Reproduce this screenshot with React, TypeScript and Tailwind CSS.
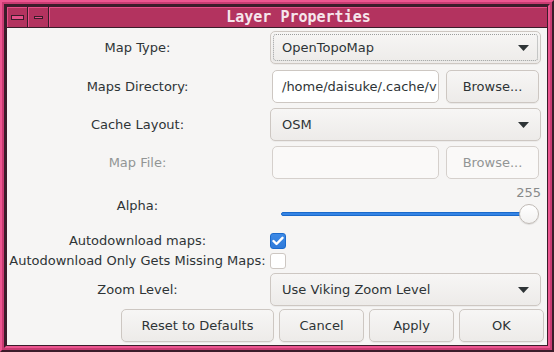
import React from 'react';

const font = "font-['DejaVu_Sans',sans-serif]";

function Label({ children, disabled }: { children: React.ReactNode; disabled?: boolean }) {
  return (
    <div
      className={`w-[261px] shrink-0 flex items-center justify-center text-[13px] whitespace-nowrap ${
        disabled ? 'text-[#929595]' : 'text-[#2e3436]'
      }`}
    >
      {children}
    </div>
  );
}

function Arrow() {
  return (
    <svg width="11" height="6" viewBox="0 0 11 6" className="shrink-0">
      <path d="M0 0 L11 0 L5.5 6 Z" fill="#2e3436" />
    </svg>
  );
}

function Combo({ value, focused }: { value: string; focused?: boolean }) {
  return (
    <div className="relative w-[271px] h-[33px] flex items-center justify-between pl-[11px] pr-[11px] rounded-[5px] border border-[#cdc7c2] bg-gradient-to-b from-[#f7f6f5] to-[#edebe9] shadow-[0_1px_0_rgba(0,0,0,0.04)] text-[13px] text-[#2e3436]">
      <span>{value}</span>
      <Arrow />
      {focused && (
        <div className="absolute inset-[2px] rounded-[3px] border border-dotted border-[#9a9d9e]" />
      )}
    </div>
  );
}

function Button({ children, width, disabled }: { children: React.ReactNode; width: string; disabled?: boolean }) {
  return (
    <div
      className={`${width} h-[33px] shrink-0 flex items-center justify-center rounded-[5px] border text-[13px] ${
        disabled
          ? 'border-[#d5d0cc] bg-[#faf9f8] text-[#929595]'
          : 'border-[#cdc7c2] bg-gradient-to-b from-[#f7f6f5] to-[#edebe9] text-[#2e3436] shadow-[0_1px_0_rgba(0,0,0,0.05)]'
      }`}
    >
      {children}
    </div>
  );
}

function Entry({ value, disabled }: { value?: string; disabled?: boolean }) {
  return (
    <div
      className={`w-[167px] h-[33px] shrink-0 flex items-center overflow-hidden pl-[9px] rounded-[5px] border text-[13px] text-[#2e3436] whitespace-nowrap ${
        disabled ? 'border-[#d5d0cc] bg-[#faf9f8]' : 'border-[#cdc7c2] bg-white'
      }`}
    >
      {value}
    </div>
  );
}

function Check({ checked }: { checked?: boolean }) {
  if (checked) {
    return (
      <div className="w-[16px] h-[16px] rounded-[3px] border border-[#1b6acb] bg-gradient-to-b from-[#3d8ae6] to-[#2f7ada] flex items-center justify-center">
        <svg width="12" height="10" viewBox="0 0 12 10">
          <path d="M1.5 5 L4.5 8 L10.5 1.8" stroke="white" strokeWidth="2.4" fill="none" strokeLinecap="round" strokeLinejoin="round" />
        </svg>
      </div>
    );
  }
  return <div className="w-[16px] h-[16px] rounded-[3px] border border-[#cdc7c2] bg-white" />;
}

export default function App() {
  return (
    <div className={`w-[554px] h-[352px] flex flex-col bg-[#c93b72] border-2 border-t-[#ec5690] border-l-[#ec5690] border-r-[#3b1c2a] border-b-[#3b1c2a] p-[2px] ${font}`}>
      <div className="flex-1 flex flex-col bg-[#3b1c2a] border-2 border-t-[#3b1c2a] border-l-[#3b1c2a] border-r-[#ec5690] border-b-[#ec5690] p-[1px] gap-[1px]">
        {/* title bar */}
        <div className="h-[20px] flex gap-[1px]">
          <div className="w-[20px] flex items-center justify-center bg-[#b3335f] border-t border-l border-[#e55089]">
            <div className="w-[13px] h-[5px] border border-[#3b1c2a] bg-[#e55089]" />
          </div>
          <div className="w-[20px] flex items-center justify-center bg-[#b3335f] border-t border-l border-[#e55089]">
            <div className="w-[9px] h-[3px] border border-[#3b1c2a] bg-[#e55089]" />
          </div>
          <div className="flex-1 flex items-center justify-center bg-[#b3335f] border-t border-l border-[#e55089] font-['DejaVu_Sans_Mono',monospace] font-bold text-[15px] text-[#f6e6ec]">
            Layer Properties
          </div>
        </div>

        {/* content */}
        <div className="flex-1 flex flex-col bg-[#f6f5f4] pr-[6px]">
          <div className="flex gap-[2px] mt-[3px] h-[33px]">
            <Label>Map Type:</Label>
            <Combo value="OpenTopoMap" focused />
          </div>

          <div className="flex gap-[2px] mt-[6px] h-[33px]">
            <Label>Maps Directory:</Label>
            <div className="flex gap-[7px] px-[2px]">
              <Entry value="/home/daisuke/.cache/v" />
              <Button width="w-[93px]">Browse...</Button>
            </div>
          </div>

          <div className="flex gap-[2px] mt-[5px] h-[33px]">
            <Label>Cache Layout:</Label>
            <Combo value="OSM" />
          </div>

          <div className="flex gap-[2px] mt-[5px] h-[33px]">
            <Label disabled>Map File:</Label>
            <div className="flex gap-[7px] px-[2px]">
              <Entry disabled />
              <Button width="w-[93px]" disabled>Browse...</Button>
            </div>
          </div>

          <div className="flex gap-[2px] mt-[4px] h-[46px]">
            <Label>Alpha:</Label>
            <div className="w-[271px] flex flex-col">
              <div className="mt-[2px] h-[15px] leading-[15px] text-right text-[13px] text-[#888a8a]">255</div>
              <div className="mt-[4px] h-[20px] flex items-center pl-[11px] pr-[2px]">
                <div className="flex-1 h-[4px] -mr-[10px] rounded-full bg-[#3584e4] border border-[#1b6acb]" />
                <div className="relative w-[20px] h-[20px] rounded-full border border-[#c0bab5] bg-gradient-to-b from-white to-[#f3f2f1] shadow-[0_1px_1px_rgba(0,0,0,0.1)]" />
              </div>
            </div>
          </div>

          <div className="flex gap-[2px] mt-[4px] h-[16px]">
            <Label>Autodownload maps:</Label>
            <Check checked />
          </div>

          <div className="flex gap-[2px] mt-[4px] h-[16px]">
            <Label>Autodownload Only Gets Missing Maps:</Label>
            <Check />
          </div>

          <div className="flex gap-[2px] mt-[4px] h-[33px]">
            <Label>Zoom Level:</Label>
            <Combo value="Use Viking Zoom Level" />
          </div>

          <div className="flex justify-end gap-[5px] mt-[3px] pr-[3px] -mr-[6px]">
            <Button width="w-[153px]">Reset to Defaults</Button>
            <Button width="w-[85px]">Cancel</Button>
            <Button width="w-[85px]">Apply</Button>
            <Button width="w-[85px]">OK</Button>
          </div>
        </div>
      </div>
    </div>
  );
}
